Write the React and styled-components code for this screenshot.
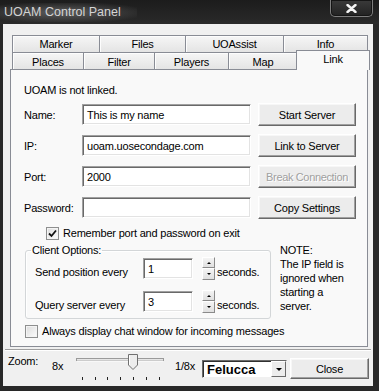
import React from 'react'
import styled, { createGlobalStyle } from 'styled-components'

const Global = createGlobalStyle`
  html, body { margin: 0; padding: 0; background: #242424; }
  body {
    font-family: "Liberation Sans", Arial, sans-serif;
    font-size: 11px;
    letter-spacing: -0.2px;
    color: #000;
  }
  * { box-sizing: border-box; }
`

// window chrome
const Window = styled.div`
  width: 379px;
  height: 391px;
  display: flex;
  flex-direction: column;
  padding: 0 6px 5px 3px;
  background: #282828;
`

const TitleBar = styled.div`
  height: 24px;
  margin: 0 -6px 0 -3px;
  display: flex;
  justify-content: space-between;
  align-items: flex-start;
  background: linear-gradient(#1c1c1c, #2a2a2a);
`

const Title = styled.span`
  margin-top: 3px;
  padding: 2px 16px 3px 4px;
  font-size: 12.5px;
  letter-spacing: 0;
  color: #d4d4d4;
  background: radial-gradient(ellipse at 45% 50%, rgba(130,130,130,0.6) 0%, rgba(90,90,90,0.35) 55%, rgba(40,40,40,0) 82%);
`

const CloseBox = styled.div`
  width: 43px;
  height: 17px;
  margin-right: 6px;
  display: flex;
  align-items: center;
  justify-content: center;
  border: 1px solid #7e7e7e;
  border-top: none;
  border-radius: 0 0 5px 5px;
  background: linear-gradient(#3a3a3a, #222);
  box-shadow: inset 0 0 0 1px #151515;
`

const Client = styled.div`
  flex: 1;
  display: flex;
  flex-direction: column;
  padding: 0 5px 0 7px;
  background: #f0f0f0;
`

// tab control
const Tabs = styled.div`
  margin-top: 11px;
  display: flex;
  flex-direction: column;
`

const TabRow = styled.div`
  height: 17px;
  display: flex;
  align-items: flex-end;
  padding-left: 2px;
`

const Tab = styled.div`
  flex: none;
  width: ${p => p.w}px;
  height: 17px;
  margin-right: -1px;
  padding-top: ${p => p.low ? 2 : 1}px;
  text-align: center;
  line-height: 14px;
  border: 1px solid #898c95;
  border-bottom: none;
  background: linear-gradient(#f6f6f6, #e4e4e4);
  box-shadow: inset 1px 1px #fdfdfd;
`

const ActiveTab = styled(Tab)`
  position: relative;
  z-index: 1;
  height: 20px;
  margin-left: -1px;
  margin-bottom: -1px;
  padding-top: 1px;
  background: #f9f9f9;
  box-shadow: none;
`

const Panel = styled.div`
  height: 278px;
  border: 1px solid #898c95;
  background: #f9f9f9;
  padding: 13px 0 0 13px;
  display: flex;
  flex-direction: column;
`

const Line = styled.div`
  line-height: 14px;
`

const Form = styled.div`
  margin-top: 6px;
  display: flex;
  flex-direction: column;
  gap: 8px;
`

const FormRow = styled.div`
  height: 23px;
  display: flex;
  align-items: center;
`

const Label = styled.span`
  flex: none;
  width: 58px;
  line-height: 14px;
`

const TextBox = styled.div`
  flex: none;
  width: ${p => p.w}px;
  height: 21px;
  margin-right: ${p => p.mr || 0}px;
  padding: 3px 0 0 4px;
  line-height: 14px;
  background: #fff;
  border: 1px solid;
  border-color: #a0a0a0 #fff #fff #a0a0a0;
  box-shadow: inset 1px 1px #696969, inset -1px -1px #e3e3e3;
  white-space: nowrap;
  overflow: hidden;
`

const Button = styled.div`
  flex: none;
  width: ${p => p.w}px;
  height: ${p => p.h || 23}px;
  display: flex;
  align-items: center;
  justify-content: center;
  background: #ececec;
  border: 1px solid;
  border-color: #fff #696969 #696969 #fff;
  box-shadow: inset -1px -1px #a0a0a0, inset 1px 1px #f7f7f7;
  white-space: nowrap;
  color: ${p => p.disabled ? '#a0a0a0' : '#000'};
  text-shadow: ${p => p.disabled ? '1px 1px #fff' : 'none'};
  letter-spacing: ${p => p.disabled ? '-0.35px' : '-0.2px'};
`

const CheckRow = styled.div`
  display: flex;
  align-items: center;
  gap: 4px;
  margin-top: ${p => p.mt}px;
  padding-left: ${p => p.indent}px;
  line-height: 14px;
`

const Box = styled.div`
  width: 13px;
  height: 13px;
  border: 1px solid #8e8f8f;
  background: linear-gradient(135deg, #dcdcdc, #fdfdfd);
  box-shadow: inset 0 0 0 1px #f4f4f4;
  display: flex;
  align-items: center;
  justify-content: center;
`

const Lower = styled.div`
  margin-top: 3px;
  display: flex;
  align-items: flex-start;
`

const Group = styled.fieldset`
  width: 246px;
  margin: 0 0 0 1px;
  padding: 0 0 5px 9px;
  border: 1px solid #d3d6d8;
  border-radius: 3px;
  box-shadow: inset 1px 1px #fff;
  display: flex;
  flex-direction: column;
  gap: 10px;
`

const Legend = styled.legend`
  margin-left: -4px;
  padding: 0 1px;
  line-height: 14px;
`

const SpinRow = styled.div`
  height: 23px;
  display: flex;
  align-items: center;
`

const SpinLabel = styled.span`
  width: 108px;
  margin-top: 6px;
`

const Spin = styled.div`
  width: 13px;
  height: 23px;
  margin-left: 9px;
  display: flex;
  flex-direction: column;
`

const SpinButton = styled.div`
  height: ${p => p.h}px;
  display: flex;
  align-items: center;
  justify-content: center;
  background: linear-gradient(#f4f4f4, #e0e0e0);
  border: 1px solid;
  border-color: #fff #8a8a8a #8a8a8a #fff;
  &::after {
    content: '';
    border-left: 2px solid transparent;
    border-right: 2px solid transparent;
    ${p => p.up ? 'border-bottom: 2px solid #000;' : 'border-top: 2px solid #000;'}
  }
`

const Unit = styled.span`
  margin: 6px 0 0 2px;
`

const Note = styled.div`
  margin-left: 9px;
  line-height: 14px;
`

const Separator = styled.div`
  margin: 2px -3px 0 -5px;
  height: 2px;
  border-top: 1px solid #a0a0a0;
  border-bottom: 1px solid #fff;
`

const ZoomBar = styled.div`
  height: 35px;
  margin-left: -2px;
  display: flex;
  align-items: flex-start;
`

const ZoomText = styled.span`
  flex: none;
  width: ${p => p.w}px;
  margin-top: ${p => p.mt}px;
  padding-left: ${p => p.pl || 0}px;
  line-height: 14px;
`

const Combo = styled.div`
  flex: none;
  width: 85px;
  height: 18px;
  margin-top: 9px;
  display: flex;
  background: #fff;
  border: 1px solid;
  border-color: #696969 #f0f0f0 #f0f0f0 #696969;
  box-shadow: inset 1px 1px #303030;
`

const ComboText = styled.span`
  flex: 1;
  padding: 1px 0 0 4px;
  font-size: 13px;
  font-weight: bold;
  letter-spacing: 0;
  line-height: 15px;
`

const ComboArrow = styled.div`
  width: 15px;
  display: flex;
  align-items: center;
  justify-content: center;
  background: #ececec;
  border: 1px solid;
  border-color: #fff #696969 #696969 #fff;
  &::after {
    content: '';
    border-left: 3px solid transparent;
    border-right: 3px solid transparent;
    border-top: 3px solid #000;
  }
`

const CloseButton = styled(Button)`
  margin: 7px 0 0 3px;
`

const Check = () => (
  <svg width="9" height="9" viewBox="0 0 9 9">
    <path d="M1 4.5 L3.5 7 L8 1.5" fill="none" stroke="#111" strokeWidth="1.8" />
  </svg>
)

const Slider = () => {
  const ticks = [6, 19, 31, 44, 57, 70, 83]
  return (
    <svg width="94" height="32" viewBox="0 0 94 32" style={{ flex: 'none' }}>
      <rect x="0.5" y="7.5" width="87" height="2" fill="#e6e6e6" stroke="#9a9a9a" />
      <line x1="1" y1="10" x2="87" y2="10" stroke="#fff" />
      {ticks.map(x => (
        <line key={x} x1={x + 0.5} y1="26" x2={x + 0.5} y2="29" stroke="#222" />
      ))}
      <path d="M52.5 3.5 H61.5 V14 L57 18.5 L52.5 14 Z" fill="#ededed" stroke="#707070" />
      <line x1="53.5" y1="4.5" x2="53.5" y2="14" stroke="#fff" />
    </svg>
  )
}

const fields = [
  { label: 'Name:', value: 'This is my name', button: 'Start Server' },
  { label: 'IP:', value: 'uoam.uosecondage.com', button: 'Link to Server' },
  { label: 'Port:', value: '2000', button: 'Break Connection', disabled: true },
  { label: 'Password:', value: '', button: 'Copy Settings' },
]

const SpinField = ({ label, value }) => (
  <SpinRow>
    <SpinLabel>{label}</SpinLabel>
    <TextBox w={50}>{value}</TextBox>
    <Spin>
      <SpinButton up h={11} />
      <SpinButton h={12} />
    </Spin>
    <Unit>seconds.</Unit>
  </SpinRow>
)

const App = () => {
  return (
    <Window>
      <Global />
      <TitleBar>
        <Title>UOAM Control Panel</Title>
        <CloseBox>
          <svg width="11" height="9" viewBox="0 0 11 9">
            <path d="M1.5 1 L9.5 8 M9.5 1 L1.5 8" stroke="#f4f4f4" strokeWidth="2.4" strokeLinecap="round" />
          </svg>
        </CloseBox>
      </TitleBar>
      <Client>
        <Tabs>
          <TabRow>
            <Tab w={88}>Marker</Tab>
            <Tab w={87}>Files</Tab>
            <Tab w={99}>UOAssist</Tab>
            <Tab w={85}>Info</Tab>
          </TabRow>
          <TabRow>
            <Tab w={72} low>Places</Tab>
            <Tab w={72} low>Filter</Tab>
            <Tab w={75} low>Players</Tab>
            <Tab w={70} low>Map</Tab>
            <ActiveTab w={74}>Link</ActiveTab>
          </TabRow>
          <Panel>
            <Line>UOAM is not linked.</Line>
            <Form>
              {fields.map(f => (
                <FormRow key={f.label}>
                  <Label>{f.label}</Label>
                  <TextBox w={169} mr={7}>{f.value}</TextBox>
                  <Button w={98} disabled={f.disabled}>{f.button}</Button>
                </FormRow>
              ))}
            </Form>
            <CheckRow mt={7} indent={22}>
              <Box><Check /></Box>
              <span>Remember port and password on exit</span>
            </CheckRow>
            <Lower>
              <Group>
                <Legend>Client Options:</Legend>
                <SpinField label="Send position every" value="1" />
                <SpinField label="Query server every" value="3" />
              </Group>
              <Note>
                NOTE:<br />
                The IP field is<br />
                ignored when<br />
                starting a<br />
                server.
              </Note>
            </Lower>
            <CheckRow mt={5} indent={1}>
              <Box />
              <span>Always display chat window for incoming messages</span>
            </CheckRow>
          </Panel>
        </Tabs>
        <Separator />
        <ZoomBar>
          <ZoomText w={44} mt={3}>Zoom:</ZoomText>
          <ZoomText w={24} mt={8}>8x</ZoomText>
          <Slider />
          <ZoomText w={32} mt={8} pl={5}>1/8x</ZoomText>
          <Combo>
            <ComboText>Felucca</ComboText>
            <ComboArrow />
          </Combo>
          <CloseButton w={79} h={21}>Close</CloseButton>
        </ZoomBar>
      </Client>
    </Window>
  )
}

export default App
